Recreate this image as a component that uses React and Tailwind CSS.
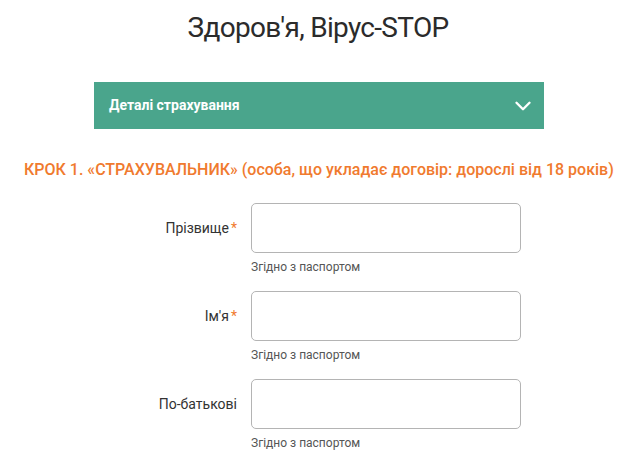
import { ChevronDown } from "lucide-react";

const fields = [
	{ label: "Прізвище", required: true },
	{ label: "Ім'я", required: true },
	{ label: "По-батькові", required: false },
];

function Field({ label, required }) {
	return (
		<div className="grid grid-cols-[237px_270px] gap-x-[14px]">
			<label className="flex items-center justify-end text-[14px] text-[#333]">
				{label}
				{required && <span className="ml-[2px] text-[#f07a2e]">*</span>}
			</label>
			<input
				type="text"
				className="h-[50px] w-[270px] rounded-[5px] border border-[#b4b4b4] bg-white px-3 outline-none"
			/>
			<div />
			<p className="mt-[6px] text-[12px] leading-[16px] text-[#555]">Згідно з паспортом</p>
		</div>
	);
}

export default function App() {
	return (
		<div className="min-h-[457px] w-[628px] bg-white pt-[11px] font-['Roboto',sans-serif]">
			<h1 className="pl-[8px] text-center text-[28px] leading-[34px] tracking-[-0.7px] text-[#2b2b2b]">
				Здоров'я, Вірус-STOP
			</h1>

			<div className="ml-[94px] mt-[37px] flex h-[47px] w-[450px] items-center justify-between bg-[#4aa58c] pl-[15px] pr-[8px] text-white">
				<span className="text-[14px] font-bold">Деталі страхування</span>
				<ChevronDown size={26} strokeWidth={2.2} />
			</div>

			<h2 className="mt-[29px] pl-[24px] text-[16px] font-medium leading-[24px] text-[#f07a2e] whitespace-nowrap">
				КРОК 1. «СТРАХУВАЛЬНИК» (особа, що укладає договір: дорослі від 18 років)
			</h2>

			<div className="mt-[21px] flex flex-col gap-[16px]">
				{fields.map((f) => (
					<Field key={f.label} {...f} />
				))}
			</div>
		</div>
	);
}
